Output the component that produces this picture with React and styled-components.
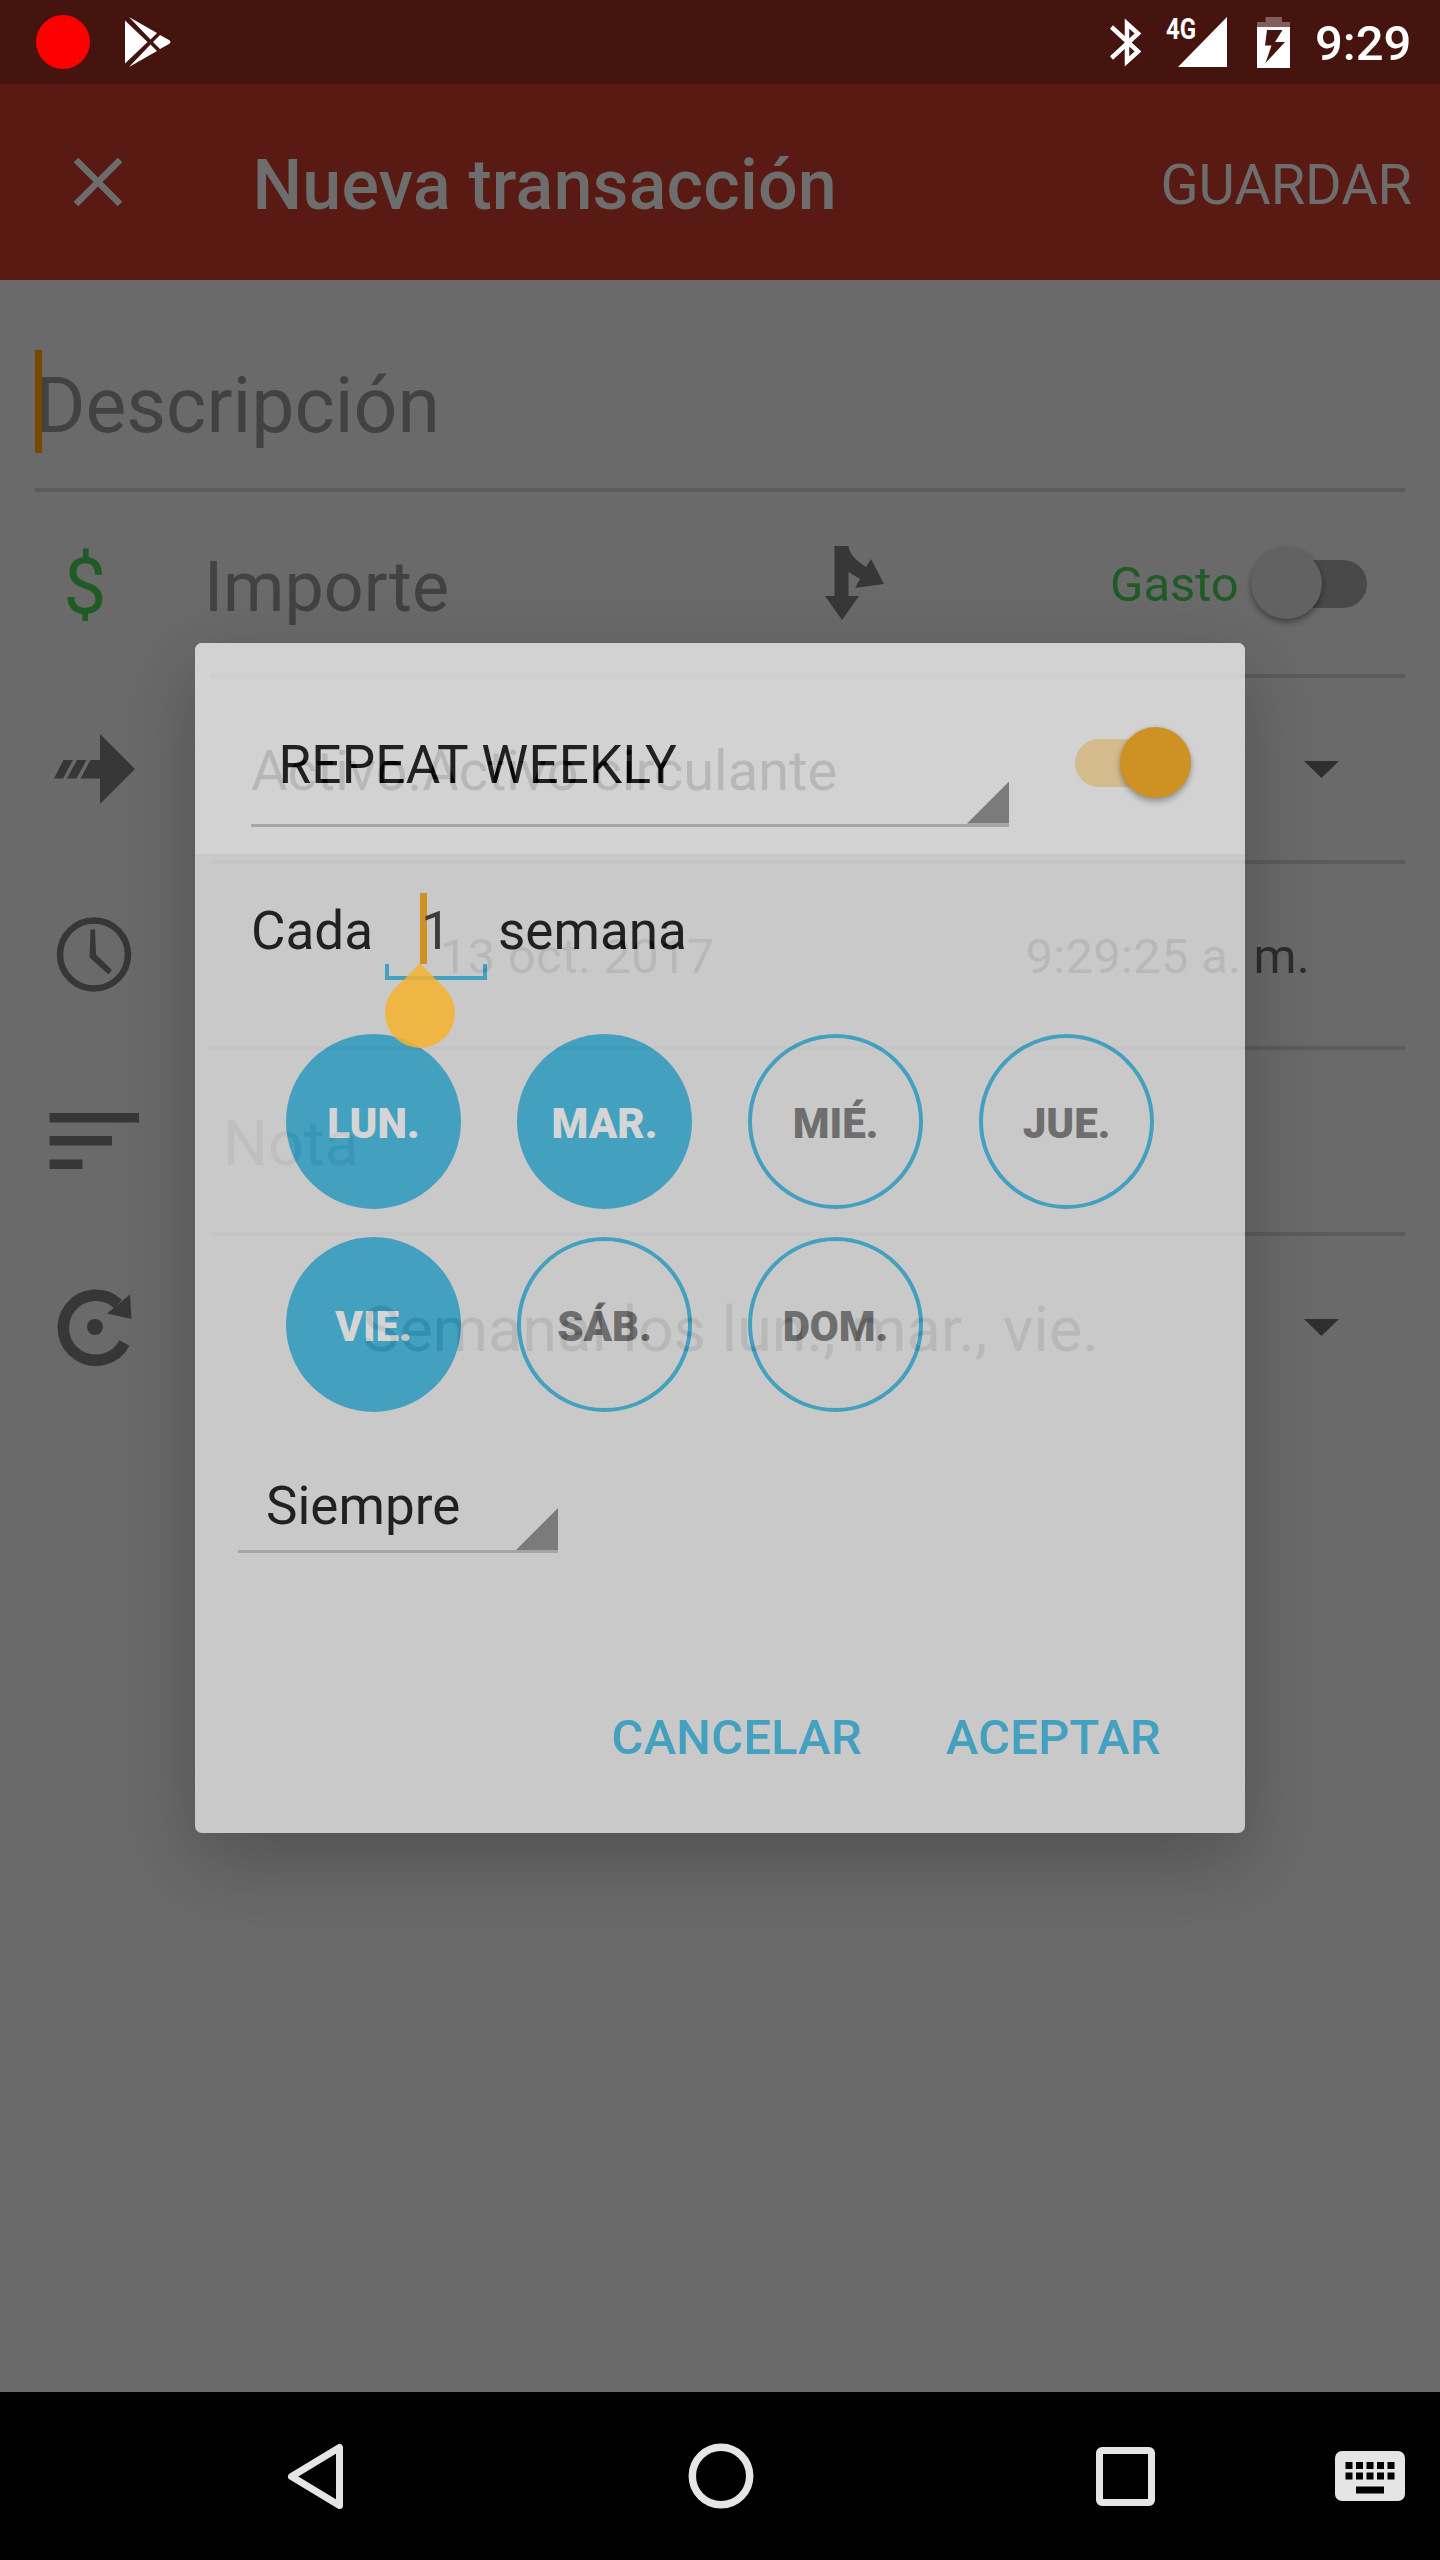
import React from 'react';
import styled, { createGlobalStyle, css } from 'styled-components';

const GlobalStyle = createGlobalStyle`
  *, *::before, *::after { box-sizing: border-box; }
  body { margin: 0; background: #000; font-family: Roboto, "Noto Sans", sans-serif; }
  svg { display: block; flex: none; overflow: visible; }
`;

const Screen = styled.div`
  position: relative;
  width: 1440px;
  height: 2560px;
  display: flex;
  flex-direction: column;
  overflow: hidden;
  background: #6a6a6a;
`;

const Text = styled.span`
  display: block;
  white-space: nowrap;
  line-height: 1.2;
  padding-top: 0.1em;
  font-size: ${p => p.$size}px;
  font-weight: ${p => p.$weight || 400};
  color: ${p => p.$color || '#2d2d2d'};
  letter-spacing: ${p => p.$track || 0}px;
`;

/* Status bar */
const StatusBar = styled.header`
  height: 84px;
  flex: none;
  display: flex;
  align-items: center;
  justify-content: space-between;
  padding: 0 29px 0 36px;
  background: #46140e;
`;
const StatusGroup = styled.div`
  display: flex;
  align-items: center;
`;
const RecordDot = styled.div`
  width: 54px;
  height: 54px;
  margin-right: 35px;
  border-radius: 50%;
  background: #ff0000;
`;
const Signal = styled.div`
  display: flex;
  align-items: flex-start;
  width: 61px;
  height: 50px;
  margin: 0 30px 0 25px;
`;
const NetworkLabel = styled.span`
  width: 12px;
  font-size: 30px;
  line-height: 24px;
  font-weight: 700;
  color: #fff;
  transform: scaleX(0.8);
  transform-origin: left;
`;
const Clock = styled.span`
  width: 96px;
  margin-left: 25px;
  padding-top: 3px;
  font-size: 49px;
  line-height: 1;
  font-weight: 500;
  color: #fff;
`;

/* App bar */
const AppBar = styled.div`
  height: 196px;
  flex: none;
  display: flex;
  align-items: center;
  padding: 0 28px 0 74px;
  background: #581a12;
`;
const Title = styled(Text)`
  flex: 1;
  margin: -2px 0 0 129.5px;
`;
const SaveAction = styled(Text)`
  margin-top: 2px;
`;

/* Form */
const Form = styled.main`
  flex: 1;
  display: flex;
  flex-direction: column;
`;
const DescriptionField = styled.div`
  height: 208px;
  display: flex;
  align-items: center;
  padding: 36px 35px 0;
`;
const DescriptionInput = styled.div`
  position: relative;
`;
const Caret = styled.div`
  position: absolute;
  left: 0;
  top: ${p => p.$top}px;
  width: 7px;
  height: ${p => p.$height}px;
  background: ${p => p.$color};
`;
const Divider = styled.div`
  height: 4px;
  flex: none;
  margin: 0 35px 0 ${p => p.$inset || 35}px;
  background: #5c5c5c;
`;
const Row = styled.div`
  height: 182px;
  flex: none;
  display: flex;
  align-items: center;
  padding-right: ${p => p.$right || 101}px;
`;
const IconCell = styled.div`
  width: ${p => p.$width || 204}px;
  flex: none;
  padding-left: 45px;
`;
const Spacer = styled.div`
  flex: 1;
`;
const Currency = styled(Text)`
  width: 80px;
  text-align: center;
`;
const SplitIconBox = styled.div`
  width: 285px;
`;
const TypeLabel = styled(Text)`
  width: 141px;
`;

/* Switch */
const SwitchRoot = styled.div`
  position: relative;
  width: 116px;
  height: 71px;
  flex: none;
  display: flex;
  align-items: center;
  justify-content: ${p => (p.$on ? 'flex-end' : 'flex-start')};
  &::before {
    content: '';
    position: absolute;
    top: 12px;
    ${p => (p.$on ? css`left: 0;` : css`right: 0;`)}
    width: 96px;
    height: 48px;
    border-radius: 24px;
    background: ${p => p.$trackColor};
  }
`;
const Thumb = styled.div`
  position: relative;
  width: 71px;
  height: 71px;
  border-radius: 50%;
  background: ${p => p.$color};
  box-shadow: 0 4px 6px rgba(0, 0, 0, 0.32), 0 0 4px rgba(0, 0, 0, 0.12);
`;

/* Dialog */
const Dialog = styled.section`
  position: absolute;
  left: 195px;
  top: 643px;
  width: 1050px;
  height: 1190px;
  display: flex;
  flex-direction: column;
  border-radius: 7px;
  background: #eee;
  opacity: 0.72;
  box-shadow: 0 26px 76px rgba(0, 0, 0, 0.32);
`;
const DialogHeader = styled.div`
  height: 211px;
  flex: none;
  display: flex;
  align-items: center;
  justify-content: space-between;
  padding: 0 54px 0 56px;
  border-radius: 7px 7px 0 0;
  background: #fbfbfb;
`;
const Spinner = styled.div`
  position: relative;
  width: ${p => p.$width}px;
  height: ${p => p.$height}px;
  flex: none;
  display: flex;
  align-items: flex-end;
  padding: 0 0 ${p => p.$bottom}px ${p => p.$left}px;
  border-bottom: 3px solid #bcbcbc;
  font-size: 53px;
  line-height: 1;
  color: #050505;
  &::after {
    content: '';
    position: absolute;
    right: 0;
    bottom: 0;
    width: 42px;
    height: 42px;
    background: #828282;
    clip-path: polygon(100% 0, 100% 100%, 0 100%);
  }
`;
const HeaderSpinner = styled(Spinner)`
  margin-top: 46px;
  letter-spacing: 0.2px;
`;
const HeaderSwitch = styled.div`
  align-self: flex-start;
  margin-top: 84px;
`;
const IntervalRow = styled.div`
  height: 154px;
  flex: none;
  display: flex;
  align-items: center;
  padding-left: 56px;
  font-size: 53px;
  line-height: 1;
  color: #050505;
`;
const IntervalLabel = styled.span`
  width: 134px;
`;
const IntervalInput = styled.div`
  position: relative;
  display: flex;
  align-items: center;
  width: 102px;
  height: 98px;
  margin-right: 11px;
  padding-left: 36px;
  color: #2a2a2a;
  &::after {
    content: '';
    position: absolute;
    inset: auto 0 0 0;
    height: 16px;
    border: 4px solid #36b5e1;
    border-top: 0;
  }
`;
const InputCaret = styled(Caret)`
  left: 35px;
`;
const Value = styled.span`
  position: relative;
`;
const Days = styled.div`
  display: grid;
  grid-template-columns: repeat(4, 175px);
  grid-auto-rows: 175px;
  gap: 28px 56px;
  margin: 26px 0 0 91px;
`;
const Day = styled.button`
  margin: 0;
  padding: 5px 0 0;
  border: 4px solid #36b5e1;
  border-radius: 50%;
  background: ${p => (p.$on ? '#36b5e1' : 'transparent')};
  color: ${p => (p.$on ? '#fff' : '#707070')};
  font: 900 42px/1 Roboto, sans-serif;
`;
const EndSpinner = styled(Spinner)`
  margin: 41px 0 0 43px;
`;
const Actions = styled.div`
  height: 192px;
  margin-top: auto;
  display: flex;
  align-items: center;
  justify-content: flex-end;
  gap: 84px;
  padding-right: 84px;
`;
const Action = styled.button`
  padding: 0;
  border: 0;
  background: none;
  color: #36b5e1;
  font: 500 49px/1 Roboto, sans-serif;
  letter-spacing: 0.15px;
`;
const SelectionHandle = styled.div`
  position: absolute;
  left: 385px;
  top: 978px;
  width: 70px;
  height: 70px;
  border-radius: 0 50% 50% 50%;
  background: rgba(246, 177, 46, 0.85);
  transform: rotate(45deg);
`;

/* Navigation bar */
const NavBar = styled.nav`
  height: 168px;
  flex: none;
  display: grid;
  grid-template-columns: 113px 405px 405px 405px 112px;
  align-items: center;
  justify-items: center;
  background: #000;
`;
const KeyboardButton = styled.div`
  justify-self: start;
  margin-left: 7px;
`;

const RowIcon = ({ children }) => (
  <svg width="100" height="100" viewBox="0 0 100 100" fill="#373737">{children}</svg>
);
const TransferIcon = () => (
  <RowIcon>
    <path d="M55 15 90 50 55 85V59.5H35.5L45.5 41H55ZM9 59.5 18.5 41H28L18 59.5ZM22 59.5 32 41H41.5L31.5 59.5Z" />
  </RowIcon>
);
const ClockIcon = () => (
  <RowIcon>
    <circle cx="49" cy="49.5" r="34" fill="none" stroke="#373737" strokeWidth="6.5" />
    <path d="M45.5 24.5h4.5l1 25 16 15.5-3.5 4.5L44.5 52.5Z" />
  </RowIcon>
);
const NotesIcon = () => (
  <RowIcon>
    <path d="M4.5 22H94v9.5H4.5ZM4.5 45H67v9.5H4.5ZM4.5 68.5H37.5V78H4.5Z" />
  </RowIcon>
);
const RepeatIcon = () => (
  <RowIcon>
    <path d="M79.5 66A32.5 32.5 0 1 1 73 27" fill="none" stroke="#373737" strokeWidth="11.5" />
    <circle cx="50" cy="50" r="8" />
    <path d="M85 17.5 86.5 42 62 36.5Z" />
  </RowIcon>
);
const DropArrow = () => (
  <svg width="35" height="18" viewBox="0 0 35 18"><path d="M0 1H35L17.5 18Z" fill="#2f2f2f" /></svg>
);

const Switch = ({ on, track, thumb }) => (
  <SwitchRoot $on={on} $trackColor={track}><Thumb $color={thumb} /></SwitchRoot>
);

const WEEK = [
  ['LUN.', true], ['MAR.', true], ['MIÉ.', false], ['JUE.', false],
  ['VIE.', true], ['SÁB.', false], ['DOM.', false],
];

export default function App() {
  return (
    <Screen>
      <GlobalStyle />
      <StatusBar>
        <StatusGroup>
          <RecordDot />
          <svg width="46" height="50" viewBox="0 0 46 50" fill="#fff">
            <path d="M0 3.5 22.5 25 0 46.5ZM4 0 32 16 25.5 22.5ZM4 50 32 34 25.5 27.5ZM35 18 44 23Q47 25 44 27L35 32 28 25Z" />
          </svg>
        </StatusGroup>
        <StatusGroup>
          <svg width="31" height="49" viewBox="0 0 31 49" fill="none" stroke="#fff" strokeWidth="4.5">
            <path d="M1.5 9 28 33.5 17 43.5V5.5L28 15.5 1.5 40" />
          </svg>
          <Signal>
            <NetworkLabel>4G</NetworkLabel>
            <svg width="49" height="50" viewBox="0 0 49 50"><path d="M49 0V50H0Z" fill="#fff" /></svg>
          </Signal>
          <svg width="33" height="51" viewBox="0 0 33 51">
            <path d="M8.5 0h16.5v5H33V10H0V5H8.5Z" fill="#835d59" />
            <path fillRule="evenodd" d="M0 10H33V51H0ZM10 13 8 28.5H14.5L8.5 46 28 25H18L25.5 13Z" fill="#fff" />
          </svg>
          <Clock>9:29</Clock>
        </StatusGroup>
      </StatusBar>

      <AppBar>
        <svg width="49" height="49" viewBox="0 0 49 49" stroke="#6d6d6d" strokeWidth="6.5">
          <path d="M2 2 46 46M46 2 2 46" />
        </svg>
        <Title as="h1" $size={70} $weight={500} $color="#6d6d6d" $track={0.15}>Nueva transacción</Title>
        <SaveAction $size={56} $color="#6d6d6d" $track={-0.1}>GUARDAR</SaveAction>
      </AppBar>

      <Form>
        <DescriptionField>
          <DescriptionInput>
            <Text $size={77} $color="#424242">Descripción</Text>
            <Caret $top={-2} $height={103} $color="#754a00" />
          </DescriptionInput>
        </DescriptionField>
        <Divider />
        <Row $right={73}>
          <IconCell><Currency $size={77} $color="#205a24">$</Currency></IconCell>
          <Text $size={70} $color="#424242">Importe</Text>
          <Spacer />
          <SplitIconBox>
            <svg width="59" height="74" viewBox="0 0 59 74" fill="#373737">
              <path d="M9.5 0H23.5Q24 10 41 21L46 13 59 38 30 42 35 33 23.5 26V50H34L17 74 0 50H9.5Z" />
            </svg>
          </SplitIconBox>
          <TypeLabel $size={49} $color="#205a24">Gasto</TypeLabel>
          <Switch track="#494949" thumb="#626262" />
        </Row>
        <Divider $inset={210} />
        <Row>
          <IconCell $width={251}><TransferIcon /></IconCell>
          <Text $size={56} $color="#080808">Activo.Activo circulante</Text>
          <Spacer />
          <DropArrow />
        </Row>
        <Divider $inset={210} />
        <Row $right={130}>
          <IconCell $width={440}><ClockIcon /></IconCell>
          <Text $size={49} $track={0.2}>13 oct. 2017</Text>
          <Spacer />
          <Text $size={49} $track={0.25}>9:29:25 a. m.</Text>
        </Row>
        <Divider $inset={210} />
        <Row>
          <IconCell $width={223}><NotesIcon /></IconCell>
          <Text $size={63} $color="#464646">Nota</Text>
        </Row>
        <Divider $inset={210} />
        <Row>
          <IconCell $width={362}><RepeatIcon /></IconCell>
          <Text $size={63}>Semanal los lun., mar., vie.</Text>
          <Spacer />
          <DropArrow />
        </Row>
      </Form>

      <NavBar>
        <span />
        <svg width="57" height="67" viewBox="0 0 57 67" fill="none" stroke="#e5e5e5" strokeWidth="7" strokeLinejoin="round">
          <path d="M52.5 4.5V62.5L4.5 33.5Z" />
        </svg>
        <svg width="66" height="66" viewBox="0 0 66 66" fill="none" stroke="#e5e5e5" strokeWidth="7.5">
          <circle cx="33" cy="33" r="28.7" />
        </svg>
        <svg width="59" height="59" viewBox="0 0 59 59" fill="none" stroke="#e5e5e5" strokeWidth="7">
          <rect x="3.5" y="3.5" width="52" height="52" rx="2.5" />
        </svg>
        <KeyboardButton>
          <svg width="70" height="50" viewBox="0 0 70 50">
            <rect width="70" height="50" rx="7" fill="#e5e5e5" />
            {[0, 1, 2, 3, 4].map(i => (
              <path key={i} d={`M${10.5 + i * 10.5} 11h7v7h-7ZM${10.5 + i * 10.5} 21.5h7v7h-7Z`} />
            ))}
            <rect x="21" y="35.5" width="28" height="7" />
          </svg>
        </KeyboardButton>
      </NavBar>

      <Dialog>
        <DialogHeader>
          <HeaderSpinner $width={758} $height={110} $left={27.5} $bottom={32}>REPEAT WEEKLY</HeaderSpinner>
          <HeaderSwitch><Switch on track="#fcdb9b" thumb="#f5a10a" /></HeaderSwitch>
        </DialogHeader>
        <IntervalRow>
          <IntervalLabel>Cada</IntervalLabel>
          <IntervalInput>
            <InputCaret $top={11} $height={71} $color="#f5a10a" />
            <Value>1</Value>
          </IntervalInput>
          <span>semana</span>
        </IntervalRow>
        <Days>
          {WEEK.map(([name, on]) => <Day key={name} $on={on}>{name}</Day>)}
        </Days>
        <EndSpinner $width={320} $height={100} $left={28} $bottom={17}>Siempre</EndSpinner>
        <Actions>
          <Action>CANCELAR</Action>
          <Action>ACEPTAR</Action>
        </Actions>
      </Dialog>
      <SelectionHandle />
    </Screen>
  );
}
